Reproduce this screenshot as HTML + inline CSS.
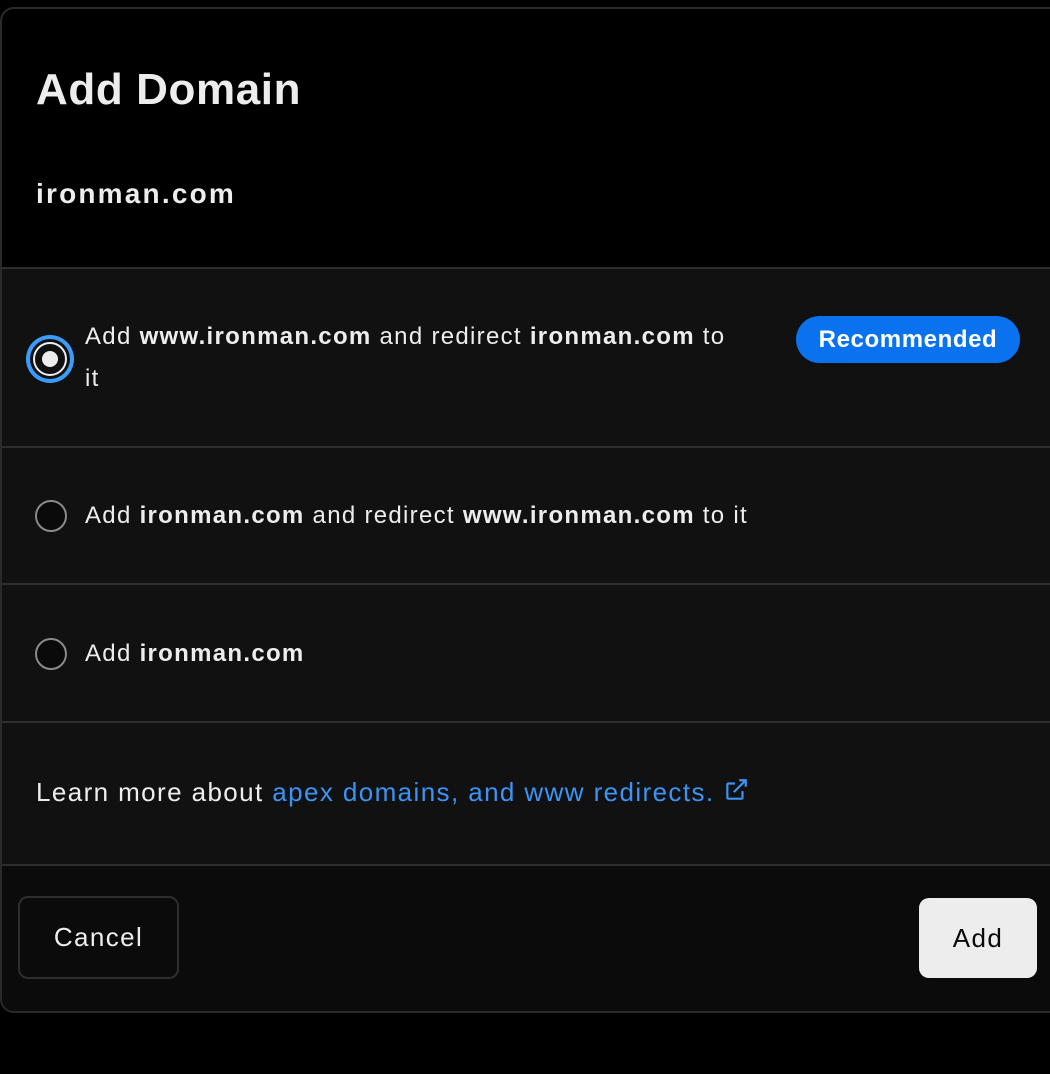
<!DOCTYPE html>
<html><head><style>
body{margin:0;width:1050px;height:1074px;background:#000;font-family:"Liberation Sans",sans-serif;color:#ededed;overflow:hidden;position:relative}
.m{position:absolute;left:0;top:7px;width:1070px;height:1002px;border:2px solid #2a2a2a;border-radius:14px;overflow:hidden;background:#000}
.h{height:258px;border-bottom:2px solid #2e2e2e;position:relative}
.h h1{position:absolute;left:34px;top:56px;margin:0;font-size:44px;font-weight:bold;letter-spacing:0.6px}
.h .d{position:absolute;left:34px;top:169px;font-size:28px;font-weight:bold;letter-spacing:2.2px}
.r{background:#111;border-bottom:2px solid #2e2e2e;position:relative;font-size:24px;letter-spacing:1.3px}
.rad{position:absolute;left:33px;width:32px;height:32px;border-radius:50%;border:2px solid #8a8a8a;box-sizing:border-box;background:#0a0a0a}
.t{position:absolute;left:83px}
.t b{font-weight:bold}
.f{background:#0b0b0b;height:146px;position:relative}
.btn{position:absolute;border-radius:10px;font-size:26px;letter-spacing:1.4px;display:flex;align-items:center;justify-content:center;box-sizing:border-box}
</style></head><body>
<div class="m">
<div class="h"><h1>Add Domain</h1><div class="d">ironman.com</div></div>
<div class="r" style="height:177px">
<div style="position:absolute;left:24px;top:66px;width:48px;height:48px;border-radius:50%;background:#3b9cff"></div>
<div style="position:absolute;left:28px;top:70px;width:40px;height:40px;border-radius:50%;background:#111"></div>
<div style="position:absolute;left:31px;top:73px;width:34px;height:34px;border-radius:50%;border:2px solid #ededed;box-sizing:border-box;background:#111"></div>
<div style="position:absolute;left:40px;top:82px;width:16px;height:16px;border-radius:50%;background:#ededed"></div>
<div class="t" style="top:47px;line-height:42px;width:660px">Add <b>www.ironman.com</b> and redirect <b>ironman.com</b> to it</div>
<div style="position:absolute;left:794px;top:47px;width:224px;height:47px;border-radius:24px;background:#0a72ef;color:#fff;font-size:24px;font-weight:bold;letter-spacing:0.6px;display:flex;align-items:center;justify-content:center">Recommended</div>
</div>
<div class="r" style="height:135px"><div class="rad" style="top:52px"></div><div class="t" style="top:54px">Add <b>ironman.com</b> and redirect <b>www.ironman.com</b> to it</div></div>
<div class="r" style="height:136px"><div class="rad" style="top:53px"></div><div class="t" style="top:55px">Add <b>ironman.com</b></div></div>
<div class="r" style="height:141px;font-size:26px;letter-spacing:1.4px"><div style="position:absolute;left:34px;top:54px">Learn more about <span style="color:#3b94f5">apex domains, and www redirects.</span>
<svg width="26" height="26" viewBox="0 0 24 24" style="vertical-align:-2px" fill="none" stroke="#3b94f5" stroke-width="2"><path d="M18 13v6a1 1 0 0 1-1 1H5a1 1 0 0 1-1-1V7a1 1 0 0 1 1-1h6M15 3h6v6M10 14L21 3"/></svg></div></div>
<div class="f">
<div class="btn" style="left:16px;top:30px;width:161px;height:83px;border:2px solid #2e2e2e">Cancel</div>
<div class="btn" style="left:917px;top:32px;width:118px;height:80px;background:#ededed;color:#0a0a0a">Add</div>
</div>
</div>
</body></html>
